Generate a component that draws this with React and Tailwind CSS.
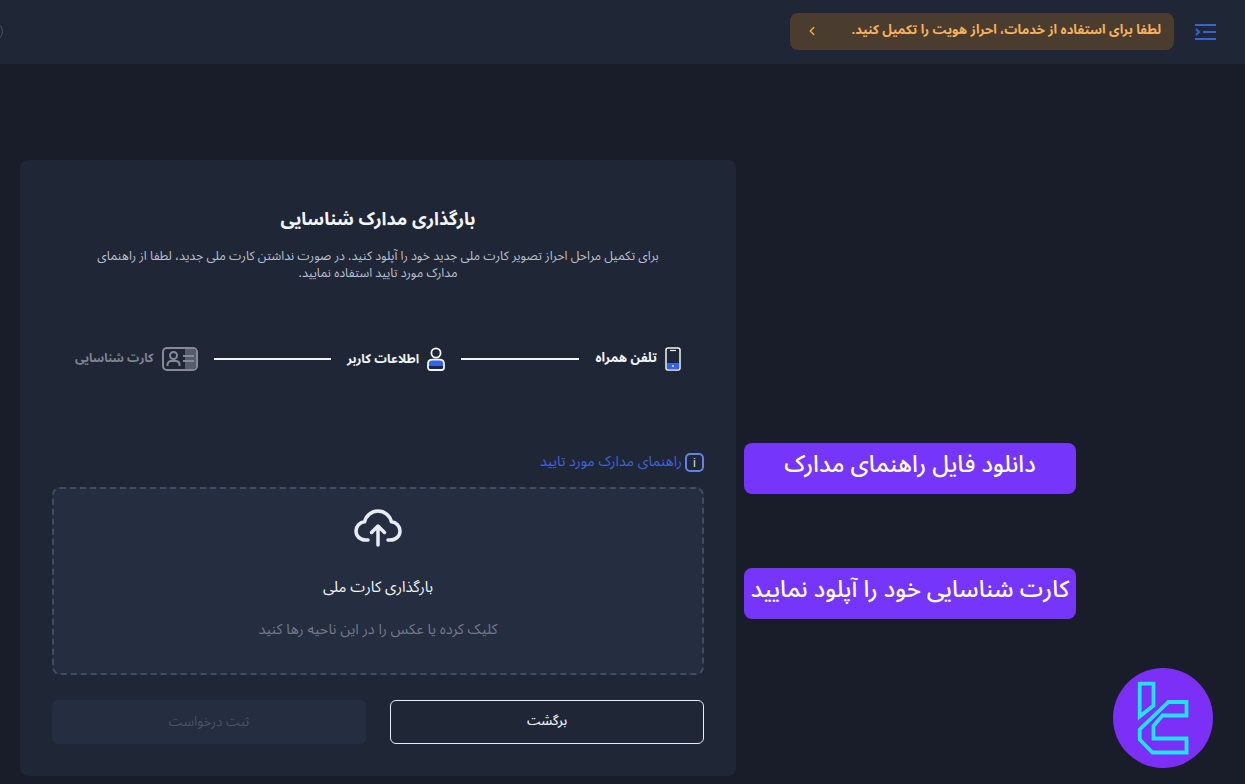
import React from 'react';
import { ChevronLeft } from 'lucide-react';

const font = "font-['Noto_Sans_Arabic','Liberation_Sans',sans-serif]";

const PhoneIcon = () => (
  <svg width="16" height="24" viewBox="0 0 16 24" fill="none">
    <rect x="1" y="1" width="14" height="22" rx="2" stroke="#f1f5f9" strokeWidth="1.5" />
    <path d="M5 3.5h6" stroke="#f1f5f9" strokeWidth="1.2" />
    <path d="M2 16h12v5.5a.8.8 0 0 1-.8.8H2.8a.8.8 0 0 1-.8-.8z" fill="#3563e9" />
    <circle cx="8" cy="19" r="1" fill="#e2e8f0" />
  </svg>
);

const UserIcon = () => (
  <svg width="18" height="24" viewBox="0 0 18 24" fill="none">
    <circle cx="9" cy="6" r="4.6" stroke="#f1f5f9" strokeWidth="1.8" />
    <path d="M1 19v-2.500C1 14 3 12.700 5.500 12.700h7c2.500 0 4.500 1.300 4.500 3.800V19z" fill="#3563e9" />
    <path d="M1 16.500C1 14 3 12.700 5.500 12.700h7c2.500 0 4.500 1.300 4.500 3.800v4c0 1.500-1 2.500-2.500 2.500h-11C2 23 1 22 1 20.500z" stroke="#f1f5f9" strokeWidth="1.800" />
  </svg>
);

const IdCardIcon = () => (
  <svg width="36" height="24" viewBox="0 0 36 24" fill="none">
    <rect x="1" y="1" width="34" height="22" rx="4" stroke="#858b96" strokeWidth="2" />
    <path d="M23 2h8a3 3 0 0 1 3 3v14a3 3 0 0 1-3 3h-8z" fill="#565c69" />
    <circle cx="11.500" cy="8.500" r="3.500" stroke="#858b96" strokeWidth="2" />
    <path d="M5.500 19v-1.500c0-2.200 1.800-3.500 4-3.500h4c2.200 0 4 1.300 4 3.500V19" stroke="#858b96" strokeWidth="2" />
    <path d="M21 9h11M21 14h11" stroke="#858b96" strokeWidth="2" />
  </svg>
);

const CloudUpload = () => (
  <svg width="48" height="38" viewBox="0 0 48 38" fill="none" stroke="#e8edf5" strokeWidth="3.5" strokeLinecap="round" strokeLinejoin="round">
    <path d="M14 31H11.500C6 31 2 27 2 22c0-5 3.800-8.800 8.600-9.200C12 6.500 17.500 2 24 2s12 4.500 13.400 10.800C42.200 13.200 46 17 46 22c0 5-4 9-9.500 9H34" />
    <path d="M24 36V17M17.500 23.500 24 17l6.500 6.500" />
  </svg>
);

const Logo = () => (
  <svg width="100" height="100" viewBox="0 0 100 100" fill="none">
    <circle cx="50" cy="50" r="50" fill="#7b2ff7" />
    <path d="M26.700 15.700H40.500V37.500L26.700 48.500z" stroke="#1fe3f8" strokeWidth="3.800" />
    <path d="M55.500 34H73.500V47.500H49.500L40.500 58V70.500H73.500V84.500H39.500L26.700 71.500V61.500z" stroke="#1fe3f8" strokeWidth="3.800" />
  </svg>
);

const Step = ({ icon, label, className }) => (
  <div className="flex items-center gap-[8px]">
    {icon}
    <span className={`font-bold ${className}`}>{label}</span>
  </div>
);

const Callout = ({ className, children }) => (
  <div className={`absolute left-[744px] w-[332px] h-[51px] rounded-lg bg-[#7635fb] text-white text-[23.500px] font-medium text-center leading-[44px] whitespace-nowrap ${className}`}>
    {children}
  </div>
);

export default function App() {
  return (
    <div dir="rtl" className={`relative h-[784px] w-[1245px] overflow-hidden bg-[#181d29] ${font}`}>
      {/* Header */}
      <header className="h-[64px] bg-[#1f2636] flex items-center pr-[29px] relative">
        <svg width="21" height="16" viewBox="0 0 21 16" fill="none">
          <path d="M0 1h21M8 8h13M0 15h21" stroke="#3563d9" strokeWidth="2" />
          <path d="M1 5l3 3-3 3" stroke="#3563d9" strokeWidth="2" />
        </svg>
        <div className="mr-[21px] mb-[2px] w-[384px] h-[37px] rounded-lg bg-[#4b3c30] flex items-center justify-between pr-[13px] pl-[15px]">
          <span className="text-[#f6b25c] text-[13px] font-bold whitespace-nowrap">لطفا برای استفاده از خدمات، احراز هویت را تکمیل کنید.</span>
          <ChevronLeft size={14} strokeWidth={2.5} className="text-[#f6a93b]" />
        </div>
        <div className="absolute left-[-16px] top-[22px] w-[19px] h-[19px] rounded-full border-[1.500px] border-[#4a5160]" />
      </header>

      {/* Card */}
      <main className="flex justify-end pl-[20px] pt-[96px]">
        <section className="w-[716px] h-[616px] rounded-lg bg-[#1f2636] px-[32px] pt-[44px]">
          <h1 className="text-center text-[#f1f5f9] text-[18px] font-bold leading-[30px]">بارگذاری مدارک شناسایی</h1>
          <p className="mt-[14px] px-[44px] text-center text-[#bcc2ce] text-[12.400px] leading-[17px]">
            برای تکمیل مراحل احراز تصویر کارت ملی جدید خود را آپلود کنید. در صورت نداشتن کارت ملی جدید، لطفا از راهنمای مدارک مورد تایید استفاده نمایید.
          </p>

          {/* Steps */}
          <div className="mt-[63px] h-[28px] px-[23px] flex items-center justify-between">
            <Step icon={<PhoneIcon />} label="تلفن همراه" className="text-[13px] text-[#f1f5f9]" />
            <div className="h-[2px] w-[118px] bg-[#f1f5f9]" />
            <Step icon={<UserIcon />} label="اطلاعات کاربر" className="text-[12.500px] text-[#f1f5f9]" />
            <div className="h-[2px] w-[117px] bg-[#f1f5f9]" />
            <Step icon={<IdCardIcon />} label="کارت شناسایی" className="text-[12px] text-[#7f8590]" />
          </div>

          <a className="mt-[79px] flex items-center gap-[3px] text-[#3f63d8] text-[14.200px] h-[20px]">
            <span className="w-[19px] h-[19px] rounded-[5px] border-2 border-[#6482e0] flex items-center justify-center text-[#d5dcef] text-[13px] leading-none font-['Liberation_Sans',sans-serif]">i</span>
            راهنمای مدارک مورد تایید
          </a>

          {/* Upload area */}
          <div className="mt-[15px] h-[188px] rounded-lg border-2 border-dashed border-[#434b5f] bg-[#252d40] flex flex-col items-center pt-[20px]">
            <CloudUpload />
            <div className="mt-[30px] text-[#f1f5f9] text-[15px] leading-[20px]">بارگذاری کارت ملی</div>
            <div className="mt-[23px] text-[#737a88] text-[14.500px] leading-[20px]">کلیک کرده یا عکس را در این ناحیه رها کنید</div>
          </div>

          {/* Buttons */}
          <div className="mt-[25px] grid grid-cols-2 gap-[24px]">
            <button className="h-[44px] rounded-md border border-[#e8edf5] text-[#e8edf5] text-[13px] font-medium">برگشت</button>
            <button className="h-[44px] rounded-md bg-[#252d40] text-[#4a5263] text-[13.500px]">ثبت درخواست</button>
          </div>
        </section>
      </main>

      <Callout className="top-[443px]">دانلود فایل راهنمای مدارک</Callout>
      <Callout className="top-[568px]">کارت شناسایی خود را آپلود نمایید</Callout>
      <div className="absolute left-[1113px] top-[668px]"><Logo /></div>
    </div>
  );
}
